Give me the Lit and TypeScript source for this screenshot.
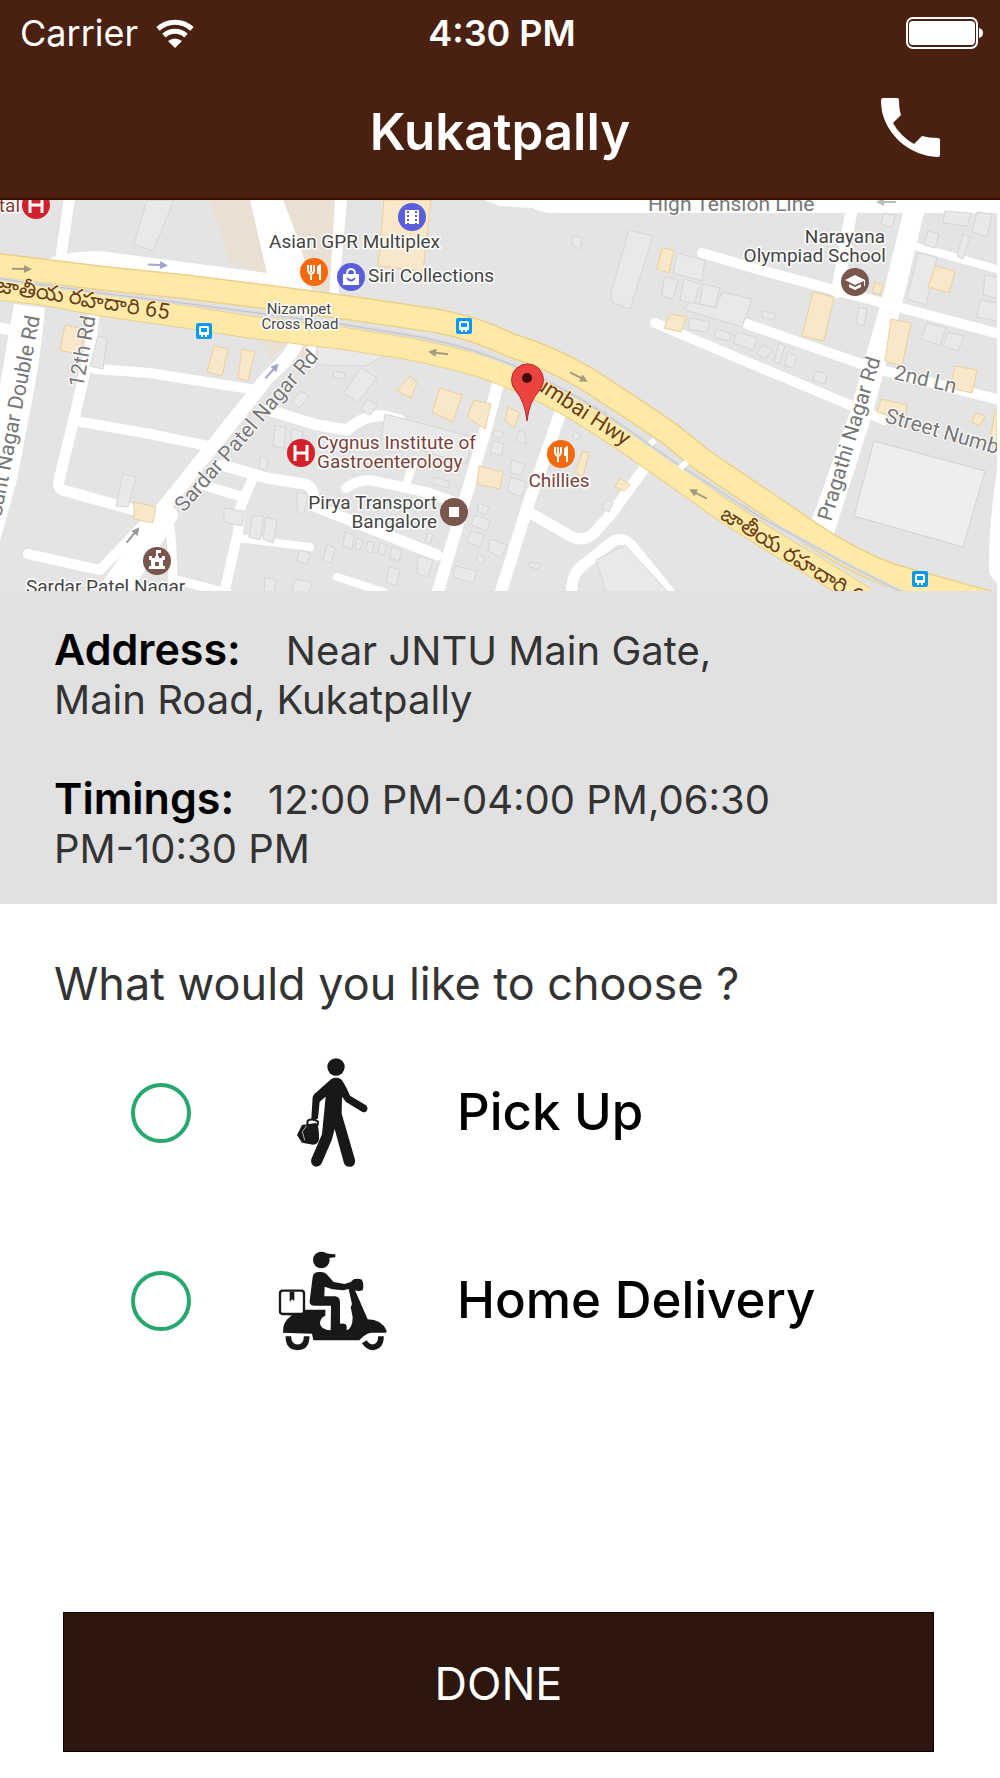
import { LitElement, html, svg, css } from "lit";
import { customElement, state } from "lit/decorators.js";

type Point = [number, number];

/** White side streets: path data and stroke width. */
const STREETS: [string, number][] = [
  ["M70 195L61 256", 11],
  ["M0 328L14 331", 11],
  ["M94 314L90 350L75 415L59 480Q57 490 66 491L145 513", 11],
  ["M95 369L150 373L250 389", 10],
  ["M76 421L150 434L208 446", 10],
  ["M297 342Q290 358 268 377L160 512L104 592", 14],
  ["M170 515L118 598", 16],
  ["M150 518L100 570L28 554", 10],
  ["M168 518Q173 535 173 600", 9],
  ["M178 580L230 594", 9],
  ["M312 342L310 364", 9],
  ["M268 410L317 425L347 430Q365 414 385 416L400 420", 11],
  ["M222 465L267 478L305 484Q315 487 314 506L437 555", 11],
  ["M200 484L243 497", 10],
  ["M252 480L240 508L238 532L224 594", 10],
  ["M238 538L310 547", 8],
  ["M337 577L384 592", 8],
  ["M346 488Q360 478 375 481L430 493L462 505", 10],
  ["M414 460L407 482", 8],
  ["M499 380L487 425L436 598", 12],
  ["M562 408L527 508L499 598", 12],
  ["M527 511L570 536Q583 543 594 533L612 513L646 466", 11],
  ["M572 598Q570 575 582 566L608 545Q620 534 631 545L674 598", 11],
  ["M852 208L837 292", 12],
  ["M702 253L760 270L883 303L1000 334", 10],
  ["M747 324L873 368L1000 400", 10],
  ["M655 323L740 359L850 405L884 420", 10],
  ["M918 247L1000 270", 8],
];

const GREY_BUILDINGS: string[] = [
  "147,200 174,200 153,251 134,244",
  "98,336 107,338 103,369 90,366",
  "116,506 123,474 136,477 128,507",
  "275,425 286,428 284,448 273,446",
  "292,429 303,432 301,444 291,442",
  "261,456 268,459 266,471 259,468",
  "224,508 244,511 242,526 224,522",
  "253,515 264,517 260,540 249,537",
  "266,517 277,520 273,543 263,539",
  "299,550 310,553 307,564 297,561",
  "327,545 335,548 331,563 323,560",
  "265,577 276,580 274,592 264,592",
  "295,579 312,582 309,592 292,592",
  "300,391 309,396 299,408 292,402",
  "317,346 386,355 365,366 318,365",
  "334,371 345,373 344,379 333,377",
  "361,368 377,378 358,402 344,393",
  "367,399 377,405 370,415 361,410",
  "297,492 308,494 304,514 297,511",
  "385,414 473,437 466,464 381,438",
  "435,477 450,482 447,488 433,484",
  "345,532 354,535 352,549 343,546",
  "357,538 363,540 360,550 355,548",
  "368,541 374,543 372,553 366,551",
  "380,543 387,545 384,555 378,553",
  "392,547 402,550 399,561 390,558",
  "418,556 433,560 428,577 417,573",
  "389,567 400,570 396,586 386,582",
  "428,532 433,535 430,544 425,541",
  "494,430 504,433 501,438 493,436",
  "493,441 504,444 501,456 490,452",
  "520,430 525,433 526,444 516,441",
  "512,460 525,464 521,476 510,472",
  "511,477 526,482 521,497 507,491",
  "479,503 489,507 486,515 477,511",
  "475,515 490,520 487,531 471,525",
  "471,531 484,535 480,547 467,542",
  "490,539 507,545 501,557 488,551",
  "478,554 485,557 482,564 476,561",
  "455,566 477,571 473,583 453,577",
  "530,562 541,564 538,569 529,567",
  "574,431 581,435 578,440 573,437",
  "607,499 613,503 609,512 602,508",
  "629,230 653,236 630,309 612,302 611,293",
  "573,236 582,238 580,249 572,245",
  "677,253 705,260 702,281 673,273",
  "664,277 678,280 673,299 662,296",
  "684,279 700,284 694,304 680,300",
  "703,284 720,288 714,308 700,304",
  "689,302 716,308 722,292 752,299 742,327 685,310",
  "690,318 710,322 706,332 688,329",
  "716,329 732,334 729,341 714,337",
  "737,332 757,338 753,350 733,343",
  "762,311 776,314 774,320 762,317",
  "763,345 772,350 765,359 757,353",
  "779,343 785,346 779,364 774,361",
  "788,353 797,356 793,368 784,365",
  "815,371 827,374 825,384 813,380",
  "859,307 867,309 864,326 856,323",
  "884,213 895,216 892,227 881,224",
  "945,211 971,213 967,226 943,223",
  "977,212 992,214 987,237 972,232",
  "928,231 939,234 935,248 924,245",
  "963,234 970,237 963,259 957,256",
  "918,253 937,257 926,305 907,299",
  "985,275 997,277 997,298 983,295",
  "980,300 997,303 997,321 977,317",
  "927,323 946,328 940,345 921,339",
  "948,332 964,336 958,351 943,346",
  "596,560 625,545 668,592 606,592",
];

const TAN_BUILDINGS: string[] = [
  "65,325 84,329 80,355 60,350",
  "214,346 228,349 222,376 207,372",
  "242,349 255,352 248,381 238,378",
  "134,502 156,507 153,523 134,519",
  "384,200 431,200 423,271 378,266",
  "410,376 417,383 411,398 397,391",
  "440,388 462,395 453,422 432,412",
  "474,400 491,404 485,429 467,417",
  "508,407 520,413 514,427 505,421",
  "479,466 503,472 500,489 477,484",
  "583,451 589,453 583,477 575,472",
  "620,478 630,485 624,491 615,487",
  "662,248 674,250 669,273 657,269",
  "670,314 687,317 681,332 664,328",
  "813,292 834,297 824,341 802,336",
  "875,282 883,285 880,295 872,292",
  "891,319 911,323 902,366 885,361",
  "935,266 955,271 949,293 928,287",
  "955,366 977,370 972,393 950,388",
  "881,399 907,405 905,419 877,412",
  "976,413 985,416 980,426 971,422",
  "995,410 997,410 997,446 989,444",
];

const EAST_LANE =
  "M-5 265L100 278L187 287L267 297L350 308L438 321Q478 329 510 345Q550 357 587 379L633 409L670 434L702 460L760 499L810 533Q850 560 890 575L990 603";
const WEST_LANE =
  "M-5 289L43 294L100 305L187 317L250 327L340 338L410 349Q450 357 483 367Q530 383 575 409L625 441L678 478L720 508L765 537L815 567L865 598";
const MEDIAN =
  "M-5 278L100 293L190 304L250 312L340 324L420 337Q480 349 530 373Q580 396 620 424L670 459L760 517L850 566L910 596";

@customElement("app-root")
export class AppRoot extends LitElement {
  static styles = css`
    :host {
      display: flex;
      flex-direction: column;
      min-height: 100vh;
      background: #fff;
      color: #333;
      font-family: Inter, "Noto Sans", sans-serif;
    }
    * {
      box-sizing: border-box;
    }
    .top {
      background: #4a2011;
      border-bottom: 2px solid #3c0c04;
      color: #fff;
    }
    .bar {
      display: grid;
      grid-template-columns: 1fr auto 1fr;
      align-items: center;
    }
    .status {
      height: 66px;
      padding: 0 16px 0 20px;
      font-size: 36px;
      line-height: 40px;
    }
    .carrier {
      display: flex;
      align-items: center;
      gap: 18px;
    }
    .time {
      font-weight: 600;
    }
    .end {
      justify-self: end;
    }
    .title-row {
      height: 132px;
      padding: 0 58px;
    }
    h1 {
      grid-column: 2;
      margin: 0;
      font-size: 51px;
      line-height: 60px;
      font-weight: 600;
    }
    .call {
      border: 0;
      padding: 0 0 8px;
      background: none;
      color: #fff;
      line-height: 0;
    }
    svg {
      display: block;
    }
    .map {
      width: calc(100% - 3px);
      height: auto;
      font-family: Roboto, "Noto Sans", sans-serif;
    }
    .poi {
      font-size: 19px;
      fill: #444;
      stroke: #fff;
      stroke-width: 3px;
      stroke-linejoin: round;
      paint-order: stroke;
    }
    .small {
      font-size: 15px;
    }
    .food {
      fill: #7b3f3a;
    }
    .street {
      font-size: 21px;
      fill: #777;
      stroke: #fff;
      stroke-width: 2px;
      paint-order: stroke;
    }
    .highway {
      font-size: 22px;
      fill: #6e3f12;
      stroke: #fff0b8;
      stroke-width: 2px;
      paint-order: stroke;
    }
    .mid {
      text-anchor: middle;
    }
    .last {
      text-anchor: end;
    }
    .info {
      margin-right: 3px;
      padding: 34px 200px 31px 54px;
      background: #e1e1e1;
      font-size: 40px;
      line-height: 49px;
    }
    .info p {
      margin: 0;
      white-space: pre-wrap;
    }
    .info p + p {
      margin-top: 50px;
    }
    .info strong {
      color: #000;
      font-size: 43px;
      line-height: 48px;
      font-weight: 600;
    }
    fieldset {
      border: 0;
      margin: 0;
      padding: 52px 54px 0;
    }
    legend {
      float: left;
      width: 100%;
      padding: 0;
      font-size: 45px;
      line-height: 56px;
    }
    .options {
      clear: both;
      display: grid;
      gap: 68px;
      padding: 41px 0 0 77px;
    }
    .option {
      display: grid;
      grid-template-columns: 60px 110px 1fr;
      column-gap: 87px;
      align-items: center;
      height: 120px;
      color: #000;
      font-size: 51px;
      font-weight: 500;
    }
    .option svg {
      justify-self: center;
    }
    .option span {
      margin: 0 0 4px -18px;
    }
    input {
      appearance: none;
      width: 60px;
      height: 60px;
      margin: 0;
      border: 4px solid #27a86e;
      border-radius: 50%;
    }
    input:checked {
      background: radial-gradient(#27a86e 50%, transparent 54%);
    }
    .actions {
      margin-top: auto;
      padding: 40px 66px 26px 63px;
    }
    .done {
      width: 100%;
      height: 140px;
      padding: 4px 0 0;
      border: 1px solid #100200;
      background: #2c160e;
      color: #fff;
      font: 400 45px/56px Inter, "Noto Sans", sans-serif;
    }
  `;

  @state() private choice = "";

  private pick(event: Event) {
    this.choice = (event.target as HTMLInputElement).value;
  }

  private bus([x, y]: Point) {
    return svg`<g transform="translate(${x} ${y})">
      <rect x="-8" y="-8" width="16" height="16" rx="2" fill="#0a98f5"/>
      <path d="M-5 -3Q-5 -5 -3 -5H3Q5 -5 5 -3V4H3V6H1V4H-1V6H-3V4H-5Z" fill="#fff"/>
      <path d="M-3 -3H3V1H-3Z" fill="#0a98f5"/>
    </g>`;
  }

  private food([x, y]: Point) {
    return svg`<g transform="translate(${x} ${y})">
      <circle r="14" fill="#f4690c"/>
      <path d="M-6 -7V-2Q-6 1 -3 2V8M0 -7V-2Q0 1 -3 2M-3 -7V0" fill="none" stroke="#fff" stroke-width="2"/>
      <path d="M3 8V-4Q3 -7 7 -8V8H5V2H3Z" fill="#fff"/>
    </g>`;
  }

  private hospital([x, y]: Point) {
    return svg`<g transform="translate(${x} ${y})">
      <circle r="14" fill="#d3202a"/>
      <path d="M-6 -8V8M6 -8V8M-6 0H6" fill="none" stroke="#fff" stroke-width="3"/>
    </g>`;
  }

  private arrow([x, y]: Point, angle: number, color = "#a39c84") {
    return svg`<path transform="translate(${x} ${y}) rotate(${angle})" d="M-10 -1H2V-4L10 0L2 4V1H-10Z" fill=${color}/>`;
  }

  private renderMap() {
    return html`<svg class="map" viewBox="0 200 997 391" role="img" aria-label="Map of Kukatpally">
      <rect y="200" width="997" height="391" fill="#e4e4e4"/>
      <path d="M210 200H250L268 274L230 263ZM283 200H336L330 292L308 288Z" fill="#e9dfd2"/>
      <path d="M257 338L290 340L272 358ZM299 344H307V360L299 352Z" fill="#e9dfd2"/>
      <path d="M48 260Q60 252 100 251L267 273L250 200H283L300 244L312 292L250 288L150 276Z" fill="#fff"/>
      <path d="M335 200H347L338 300H329Z" fill="#fff"/>
      <path d="M14 304L45 308Q40 360 33 396L17 480L0 541V385Z" fill="#fff"/>
      <path d="M485 200L500 206L533 208Q540 213 555 213H903L883 295L850 412L809 528L832 540L873 412L903 300L924 213H997V200Z" fill="#fff"/>
      <path d="M997 470Q988 530 989 572Q992 580 997 582Z" fill="#fff"/>
      ${STREETS.map(([d, w]) => svg`<path d=${d} fill="none" stroke="#fff" stroke-width=${w} stroke-linecap="round" stroke-linejoin="round"/>`)}
      ${GREY_BUILDINGS.map((p) => svg`<polygon points=${p} fill="#e9e9e9" stroke="#d6d6d6"/>`)}
      <polygon points="874,441 985,471 963,547 854,516" fill="#eee" stroke="#d2d2d2"/>
      ${TAN_BUILDINGS.map((p) => svg`<polygon points=${p} fill="#f8e7c8" stroke="#edd09a"/>`)}
      <g fill="none">
        <path d=${MEDIAN} stroke="#e2e2e2" stroke-width="14"/>
        <path d=${EAST_LANE} stroke="#ecd08a" stroke-width="25"/>
        <path d=${WEST_LANE} stroke="#ecd08a" stroke-width="23"/>
        <path d=${EAST_LANE} stroke="#ffe9a6" stroke-width="22"/>
        <path d=${WEST_LANE} stroke="#ffe9a6" stroke-width="21"/>
        <path d=${MEDIAN} stroke="#dcdcdc" stroke-width="4"/>
        <path d=${MEDIAN} stroke="#bfc3c8" stroke-width="1"/>
        <path d="M650 444L655 440M680 468L687 462" stroke="#fff" stroke-width="6"/>
      </g>
      ${this.arrow([22, 269], 2)} ${this.arrow([158, 265], 3, "#a3a6c9")}
      ${this.arrow([272, 371], -48, "#a3a6c9")} ${this.arrow([133, 535], -50, "#999")}
      ${this.arrow([438, 353], 187)} ${this.arrow([579, 377], 28)}
      ${this.arrow([698, 494], 208)} ${this.arrow([886, 202], 180, "#bbb")}
      ${this.bus([204, 331])} ${this.bus([464, 326])} ${this.bus([920, 579])}
      ${this.hospital([36, 205])} ${this.hospital([301, 453])}
      ${this.food([314, 272])} ${this.food([561, 454])}
      <g transform="translate(412 217)">
        <circle r="14" fill="#5a5edb"/>
        <path d="M-7 -7H7V7H-7Z" fill="#fff"/>
        <path d="M-4 -6V7M4 -6V7" stroke="#5a5edb" stroke-width="2" stroke-dasharray="2 2"/>
      </g>
      <g transform="translate(351 277)">
        <circle r="14" fill="#5a5edb"/>
        <path d="M-8 -3H8V8H-8Z" fill="#fff"/>
        <path d="M-4 -3Q-4 -8 0 -8Q4 -8 4 -3" fill="none" stroke="#fff" stroke-width="2"/>
        <path d="M-4 1Q0 6 4 1" fill="none" stroke="#5a5edb" stroke-width="2"/>
      </g>
      <g transform="translate(454 512)">
        <circle r="14" fill="#7a564d"/>
        <path d="M-5 -5H5V5H-5Z" fill="#fff"/>
      </g>
      <g transform="translate(157 561)">
        <circle r="14" fill="#7a564d"/>
        <path d="M-8 8V5H-6V-1H-8V-5H-5V-3H-2V-5H-1V-11H4V-8H1V-5H2V-3H5V-5H8V-1H6V5H8V8Z" fill="#fff"/>
        <path d="M-2 1H2V5H-2Z" fill="#7a564d"/>
      </g>
      <g transform="translate(855 282)">
        <circle r="14" fill="#7a564d"/>
        <path d="M0 -7L10 -2V4H9V-1L0 3L-10 -2ZM-6 2L0 5L6 2V5L0 8L-6 5Z" fill="#fff"/>
      </g>
      <g class="highway">
        <text transform="translate(-5 292) rotate(9)">జాతీయ రహదారి 65</text>
        <text transform="translate(533 387) rotate(33)">umbai Hwy</text>
        <text transform="translate(719 518) rotate(32)">జాతీయ రహదారి 65</text>
      </g>
      <g class="street">
        <text class="last" transform="translate(40 317) rotate(-79)">Sant Nagar Double Rd</text>
        <text transform="translate(83 388) rotate(-80)">12th Rd</text>
        <text transform="translate(184 513) rotate(-49)">Sardar Patel Nagar Rd</text>
        <text transform="translate(831 522) rotate(-73)">Pragathi Nagar Rd</text>
        <text transform="translate(893 379) rotate(13)">2nd Ln</text>
        <text transform="translate(884 422) rotate(16)">Street Number 1</text>
        <text x="648" y="211">High Tension Line</text>
      </g>
      <g class="poi">
        <text x="269" y="248">Asian GPR Multiplex</text>
        <text x="368" y="282">Siri Collections</text>
        <text x="299" y="314" class="small mid">Nizampet</text>
        <text x="300" y="329" class="small mid">Cross Road</text>
        <text x="317" y="449" class="food">Cygnus Institute of</text>
        <text x="317" y="468" class="food">Gastroenterology</text>
        <text x="437" y="509" class="last">Pirya Transport</text>
        <text x="437" y="528" class="last">Bangalore</text>
        <text x="559" y="487" class="food mid">Chillies</text>
        <text x="885" y="243" class="last">Narayana</text>
        <text x="886" y="262" class="last">Olympiad School</text>
        <text x="26" y="593">Sardar Patel Nagar</text>
        <text x="20" y="212" class="food last">Hospital</text>
      </g>
      <path d="M527 421Q525 402 516 391A16 16 0 1 1 539 391Q529 402 527 421Z" fill="#ea4340" stroke="#b52b27"/>
      <circle cx="527" cy="378" r="5" fill="#450c0c"/>
    </svg>`;
  }

  render() {
    return html`
      <header class="top">
        <div class="bar status">
          <div class="carrier">
            <span>Carrier</span>
            <svg width="38" height="29" viewBox="0 0 38 29" fill="none" stroke="#fff" stroke-width="5" aria-hidden="true">
              <path d="M2 9.8A25 25 0 0 1 36 9.8"/>
              <path d="M8 16.6A16 16 0 0 1 30 16.6"/>
              <path d="M19 29L12 22Q19 17 26 22Z" fill="#fff" stroke="none"/>
            </svg>
          </div>
          <div class="time">4:30 PM</div>
          <svg class="end" width="78" height="32" viewBox="0 0 78 32" aria-label="Battery full">
            <rect x="1" y="1" width="70" height="30" rx="6" fill="none" stroke="#fff" stroke-width="2"/>
            <rect x="3" y="4" width="66" height="24" rx="4" fill="#fff"/>
            <path d="M73 11Q77 12 77 16Q77 20 73 21Z" fill="#fff"/>
          </svg>
        </div>
        <div class="bar title-row">
          <h1>Kukatpally</h1>
          <button class="call end" aria-label="Call">
            <svg width="62" height="62" viewBox="0 0 62 62">
              <path d="M3 1H17Q19 1 19 3Q19 12 21 18L13 26Q20 39 34 47L42 39Q49 41 58 41Q60 41 60 43V58Q60 60 58 60Q36 59 19 44Q1 26 1 4Q1 1 3 1Z" fill="#fff"/>
            </svg>
          </button>
        </div>
      </header>
      ${this.renderMap()}
      <section class="info">
        <p><strong>Address:</strong>${"\u00a0\u00a0\u00a0 "}Near JNTU Main Gate, Main Road, Kukatpally</p>
        <p><strong>Timings:</strong>${"\u00a0\u00a0 "}12:00 PM-04:00 PM,06:30 PM-10:30 PM</p>
      </section>
      <fieldset>
        <legend>What would you like to choose ?</legend>
        <div class="options">
          <label class="option">
            <input type="radio" name="mode" value="pickup" .checked=${this.choice === "pickup"} @change=${this.pick} />
            <svg width="74" height="112" viewBox="140 52 222 336" fill="#1a1718" stroke-linecap="round" stroke-linejoin="round" aria-hidden="true">
              <circle cx="260" cy="82" r="26"/>
              <path d="M246 118Q260 110 274 118Q284 126 302 168L350 197Q358 206 352 214Q346 220 338 216L290 187L278 171L277 222L317 360Q319 376 306 381Q290 384 284 371L256 268L247 302L217 371Q209 384 195 380Q182 374 186 358L218 284L229 171L211 186L206 236Q197 244 186 238L190 172Q193 162 202 157Z"/>
              <path d="M174 254L175 243Q190 235 206 246L205 256" fill="none" stroke="#1a1718" stroke-width="6"/>
              <path d="M158 256L200 250Q210 256 209 300Q205 314 192 315L158 309L143 286Z"/>
              <path d="M171 259L159 276L166 301" fill="none" stroke="#fff" stroke-width="2"/>
            </svg>
            <span>Pick Up</span>
          </label>
          <label class="option">
            <input type="radio" name="mode" value="delivery" .checked=${this.choice === "delivery"} @change=${this.pick} />
            <svg width="110" height="100" viewBox="82 634 330 300" fill="#1a1718" aria-hidden="true">
              <circle cx="212" cy="661" r="25"/>
              <path d="M212 637Q225 643 254 644V653L234 655Z"/>
              <path d="M186 712Q188 697 205 697Q222 695 230 706L249 727L282 733L300 727L309 719Q320 715 334 720Q341 737 336 752Q322 756 313 752L351 839Q392 839 408 873L406 879H362Q342 882 326 902H188L184 882L97 879Q94 847 124 827H113L150 810H224V828Q208 834 208 852Q211 870 240 872L241 798H190Q175 797 177 783ZM222 741L221 770H254Q268 772 268 788V852Q288 850 288 860V872Q306 866 306 832L300 803L304 794L294 748L278 752L245 749Z"/>
              <rect x="88" y="753" width="72" height="70" rx="8" fill="#fff" stroke="#1a1718" stroke-width="7"/>
              <path d="M117 756H131V784L124 779L117 787Z"/>
              <path d="M113 890Q113 923 141 923Q168 923 168 890M341 906Q352 923 367 923Q391 920 391 890" fill="none" stroke="#1a1718" stroke-width="17"/>
            </svg>
            <span>Home Delivery</span>
          </label>
        </div>
      </fieldset>
      <div class="actions"><button class="done">DONE</button></div>
    `;
  }
}
